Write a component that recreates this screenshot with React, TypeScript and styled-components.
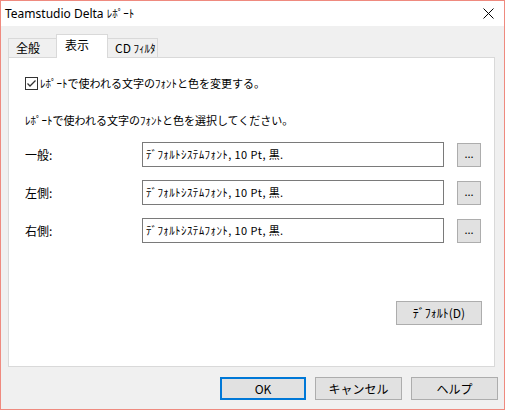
import React from 'react';
import styled, { createGlobalStyle } from 'styled-components';

const GlobalStyle = createGlobalStyle`
  html, body {
    margin: 0;
    padding: 0;
    background: #ffffff;
  }
  * {
    box-sizing: border-box;
  }
`;

const Window = styled.div`
  width: 505px;
  height: 410px;
  display: flex;
  flex-direction: column;
  border: 1px solid #ef8a7f;
  background: #f0f0f0;
  font-family: "Noto Sans CJK JP", "Noto Sans", sans-serif;
  font-size: 11px;
  color: #000;
`;

const TitleBar = styled.div`
  height: 25px;
  flex-shrink: 0;
  display: flex;
  align-items: center;
  justify-content: space-between;
  background: #ffffff;
  padding: 0 10px 0 4px;
`;

const TitleText = styled.span`
  font-family: "Noto Sans", "Noto Sans CJK JP", sans-serif;
  font-size: 12px;
  line-height: 1;
  .jp {
    font-family: "Noto Sans CJK JP", sans-serif;
    font-size: 11px;
  }
`;

const Body = styled.div`
  flex: 1;
  display: flex;
  flex-direction: column;
  padding: 8px 6px 0 7px;
`;

const TabStrip = styled.div`
  display: flex;
  align-items: flex-end;
  height: 23px;
`;

const Tab = styled.div<{ $active?: boolean; $width: number }>`
  width: ${p => p.$width}px;
  height: ${p => (p.$active ? 24 : 19)}px;
  margin-bottom: ${p => (p.$active ? -1 : 0)}px;
  margin-left: -1px;
  border: 1px solid #d9d9d9;
  border-bottom: none;
  background: ${p => (p.$active ? '#ffffff' : '#f0f0f0')};
  position: relative;
  z-index: ${p => (p.$active ? 1 : 0)};
  display: flex;
  align-items: flex-start;
  padding: ${p => (p.$active ? '2px 0 0 8px' : '1px 0 0 7px')};
  font-size: 12px;
  line-height: 16px;
  &:first-child {
    margin-left: 0;
  }
  .narrow {
    font-size: 11px;
  }
`;

const Panel = styled.div`
  width: 487px;
  height: 310px;
  border: 1px solid #d9d9d9;
  background: #ffffff;
  padding: 18px 12px 0 16px;
  display: flex;
  flex-direction: column;
`;

const CheckRow = styled.label`
  display: flex;
  align-items: center;
  gap: 2px;
  height: 15px;
  line-height: 15px;
`;

const CheckBox = styled.span`
  width: 13px;
  height: 13px;
  border: 1px solid #333333;
  background: #ffffff;
  display: flex;
  align-items: center;
  justify-content: center;
`;

const Hint = styled.div`
  margin-top: 22px;
  line-height: 15px;
`;

const FieldList = styled.div`
  margin-top: 14px;
  display: flex;
  flex-direction: column;
  gap: 13px;
`;

const FieldRow = styled.div`
  display: flex;
  align-items: center;
  height: 25px;
`;

const FieldLabel = styled.span`
  width: 117px;
  font-size: 12px;
`;

const FieldInput = styled.div`
  width: 302px;
  height: 25px;
  border: 1px solid #7a7a7a;
  background: #ffffff;
  display: flex;
  align-items: center;
  padding: 0 0 2px 3px;
  white-space: nowrap;
  letter-spacing: 0.4px;
`;

const Button = styled.button<{ $primary?: boolean; $w: number; $h: number }>`
  width: ${p => p.$w}px;
  height: ${p => p.$h}px;
  margin: 0;
  padding: 0;
  background: #e1e1e1;
  border: ${p => (p.$primary ? '2px solid #0078d7' : '1px solid #adadad')};
  font-family: "Noto Sans CJK JP", "Noto Sans", sans-serif;
  font-size: 12px;
  color: #000;
  display: flex;
  align-items: center;
  justify-content: center;
  line-height: 1;
`;

const EllipsisButton = styled(Button)`
  margin-left: 13px;
  font-size: 11px;
  padding-bottom: 3px;
`;

const DefaultRow = styled.div`
  display: flex;
  justify-content: flex-end;
  margin-top: 58px;
`;

const Footer = styled.div`
  display: flex;
  justify-content: flex-end;
  gap: 9px;
  margin-top: 10px;
`;

const fontValue = 'ﾃﾞﾌｫﾙﾄｼｽﾃﾑﾌｫﾝﾄ, 10 Pt, 黒.';

const fields = ['一般:', '左側:', '右側:'];

function App() {
  return (
    <>
      <GlobalStyle />
      <Window>
        <TitleBar>
          <TitleText>
            Teamstudio Delta <span className="jp">ﾚﾎﾟｰﾄ</span>
          </TitleText>
          <svg width="11" height="11" viewBox="0 0 11 11">
            <path d="M0.5 0.5 L10.5 10.5 M10.5 0.5 L0.5 10.5" stroke="#000" strokeWidth="1" />
          </svg>
        </TitleBar>
        <Body>
          <TabStrip>
            <Tab $width={49}>全般</Tab>
            <Tab $active $width={52}>表示</Tab>
            <Tab $width={51}>
              CD&nbsp;<span className="narrow">ﾌｨﾙﾀ</span>
            </Tab>
          </TabStrip>
          <Panel>
            <CheckRow>
              <CheckBox>
                <svg width="11" height="11" viewBox="0 0 11 11">
                  <path d="M1.5 5.5 L4 8 L9.5 2.5" stroke="#333" strokeWidth="1.3" fill="none" />
                </svg>
              </CheckBox>
              ﾚﾎﾟｰﾄで使われる文字のﾌｫﾝﾄと色を変更する。
            </CheckRow>
            <Hint>ﾚﾎﾟｰﾄで使われる文字のﾌｫﾝﾄと色を選択してください。</Hint>
            <FieldList>
              {fields.map(label => (
                <FieldRow key={label}>
                  <FieldLabel>{label}</FieldLabel>
                  <FieldInput>{fontValue}</FieldInput>
                  <EllipsisButton $w={24} $h={24}>...</EllipsisButton>
                </FieldRow>
              ))}
            </FieldList>
            <DefaultRow>
              <Button $w={86} $h={24}>ﾃﾞﾌｫﾙﾄ(D)</Button>
            </DefaultRow>
          </Panel>
          <Footer>
            <Button $primary $w={86} $h={23}>OK</Button>
            <Button $w={87} $h={23}>キャンセル</Button>
            <Button $w={87} $h={23}>ヘルプ</Button>
          </Footer>
        </Body>
      </Window>
    </>
  );
}

export default App;
